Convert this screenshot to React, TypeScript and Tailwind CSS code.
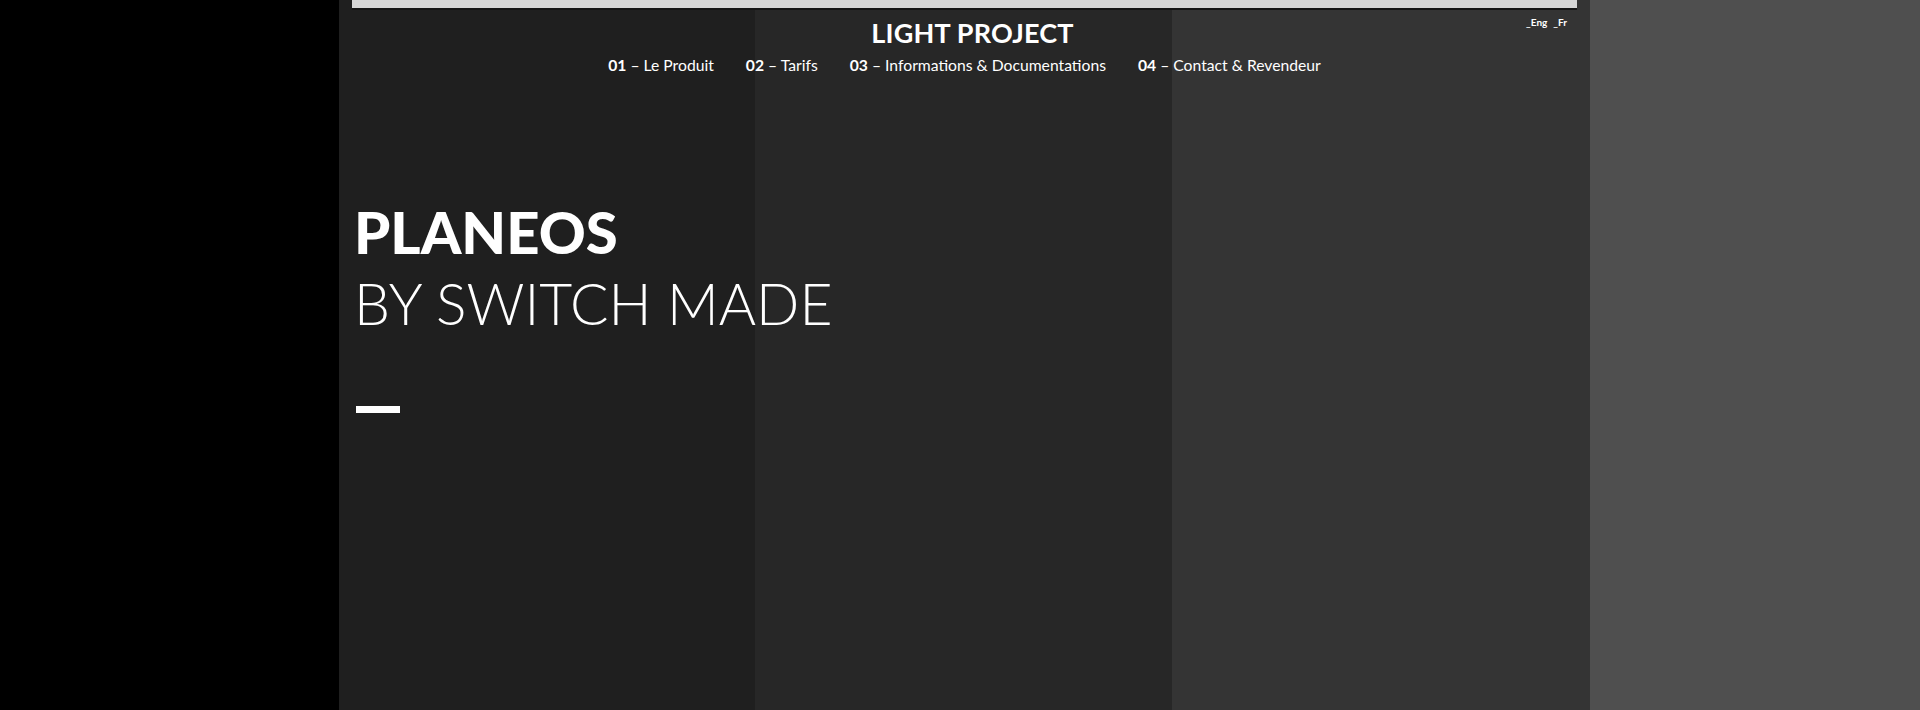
const navItems = [
  { num: "01", label: "Le Produit" },
  { num: "02", label: "Tarifs" },
  { num: "03", label: "Informations & Documentations" },
  { num: "04", label: "Contact & Revendeur" },
];

export default function App() {
  return (
    <div className="flex h-[710px] w-full overflow-hidden font-['Lato',sans-serif] text-white">
      <div className="w-[339px] shrink-0 bg-black" />

      <main className="flex w-[1251px] shrink-0 flex-col bg-[linear-gradient(to_right,#1f1f1f_0_416px,#272727_416px_833px,#343434_833px)]">
        <div className="mx-[13px] h-[10px] border-b-2 border-[#161616] bg-[#d6d6d6]" />

        <header className="grid grid-cols-[1fr_auto_1fr] items-start pt-[7px]">
          <div />
          <h1 className="pl-[16px] text-[27px] font-bold leading-[31px] tracking-[0.2px]">
            LIGHT PROJECT
          </h1>
          <div className="-mt-[2px] flex justify-end gap-[6px] pr-[23px] text-[10px] font-bold">
            <a href="#">_Eng</a>
            <a href="#">_Fr</a>
          </div>
        </header>

        <nav className="mt-[6px] flex justify-center gap-[32px] text-[15.7px]">
          {navItems.map((item) => (
            <a key={item.num} href="#" className="whitespace-nowrap">
              <span className="font-bold">{item.num}</span> – {item.label}
            </a>
          ))}
        </nav>

        <section className="pl-[15px] pt-[124px]">
          <h2 className="text-[58px] font-black leading-[60px]">PLANEOS</h2>
          <p className="mt-[10px] text-[57px] font-light leading-[62px]">BY SWITCH MADE</p>
          <div className="ml-[2px] mt-[72px] h-[7px] w-[44px] bg-white" />
        </section>
      </main>

      <div className="flex-1 bg-[#4f4f4f]" />
    </div>
  );
}
